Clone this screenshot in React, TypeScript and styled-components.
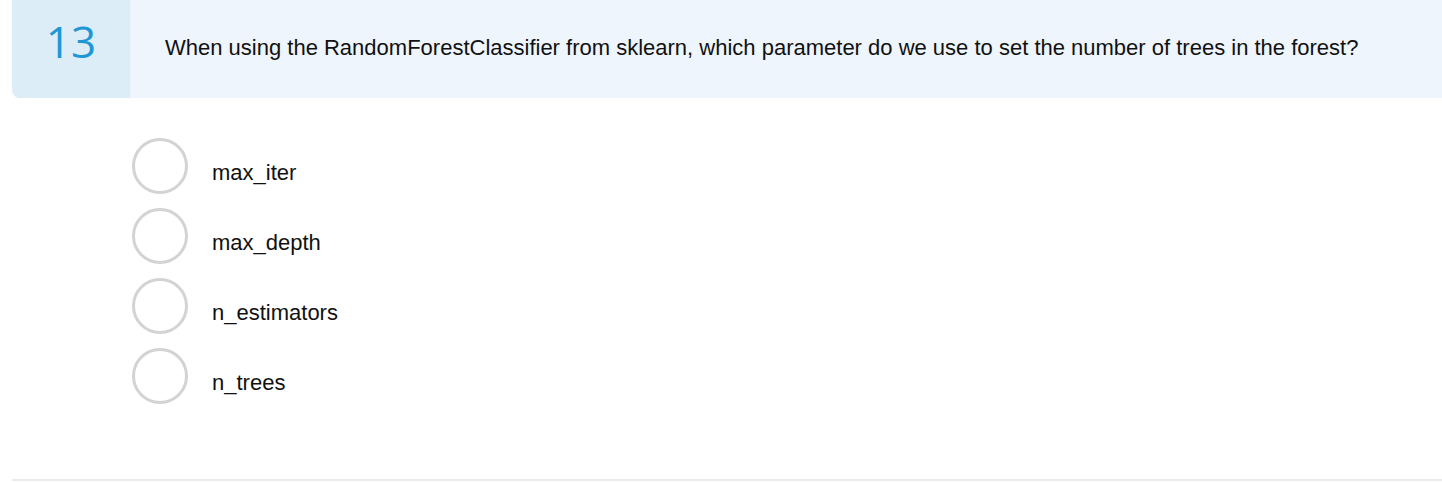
import React from "react";
import styled, { createGlobalStyle } from "styled-components";

const Global = createGlobalStyle`
  html, body { margin: 0; padding: 0; background: #ffffff; }
  body { font-family: "Liberation Sans", Arial, sans-serif; }
`;

const Page = styled.div`
  width: 1442px;
  height: 482px;
  padding-left: 12px;
  box-sizing: border-box;
  display: flex;
  flex-direction: column;
`;

const Header = styled.div`
  display: flex;
  height: 98px;
  background: #eef5fc;
  border-bottom-left-radius: 8px;
  overflow: hidden;
`;

const NumberCell = styled.div`
  width: 118px;
  flex: none;
  background: #dcedf8;
  display: flex;
  align-items: center;
  justify-content: center;
  font-family: "Open Sans", sans-serif;
  font-size: 44px;
  color: #1f97d6;
  padding-bottom: 16px;
  box-sizing: border-box;
`;

const Question = styled.div`
  display: flex;
  align-items: center;
  padding-left: 35px;
  padding-bottom: 2px;
  font-size: 22px;
  color: #111111;
`;

const Options = styled.div`
  display: flex;
  flex-direction: column;
  gap: 14px;
  padding: 40px 0 0 120px;
  flex: 1;
`;

const Option = styled.label`
  display: flex;
  align-items: center;
  gap: 24px;
  cursor: pointer;
`;

const Radio = styled.span`
  width: 56px;
  height: 56px;
  box-sizing: border-box;
  border: 3px solid #d3d3d3;
  border-radius: 50%;
  flex: none;
`;

const Label = styled.span`
  font-size: 22px;
  color: #111111;
  padding-top: 13px;
`;

const Divider = styled.div`
  height: 2px;
  background: #ebebeb;
  margin-bottom: 1px;
`;

const options = ["max_iter", "max_depth", "n_estimators", "n_trees"];

export default function App() {
  return (
    <>
      <Global />
      <Page>
        <Header>
          <NumberCell>13</NumberCell>
          <Question>
            When using the RandomForestClassifier from sklearn, which parameter do we use to set the number of trees in the forest?
          </Question>
        </Header>
        <Options>
          {options.map((o) => (
            <Option key={o}>
              <Radio />
              <Label>{o}</Label>
            </Option>
          ))}
        </Options>
        <Divider />
      </Page>
    </>
  );
}
